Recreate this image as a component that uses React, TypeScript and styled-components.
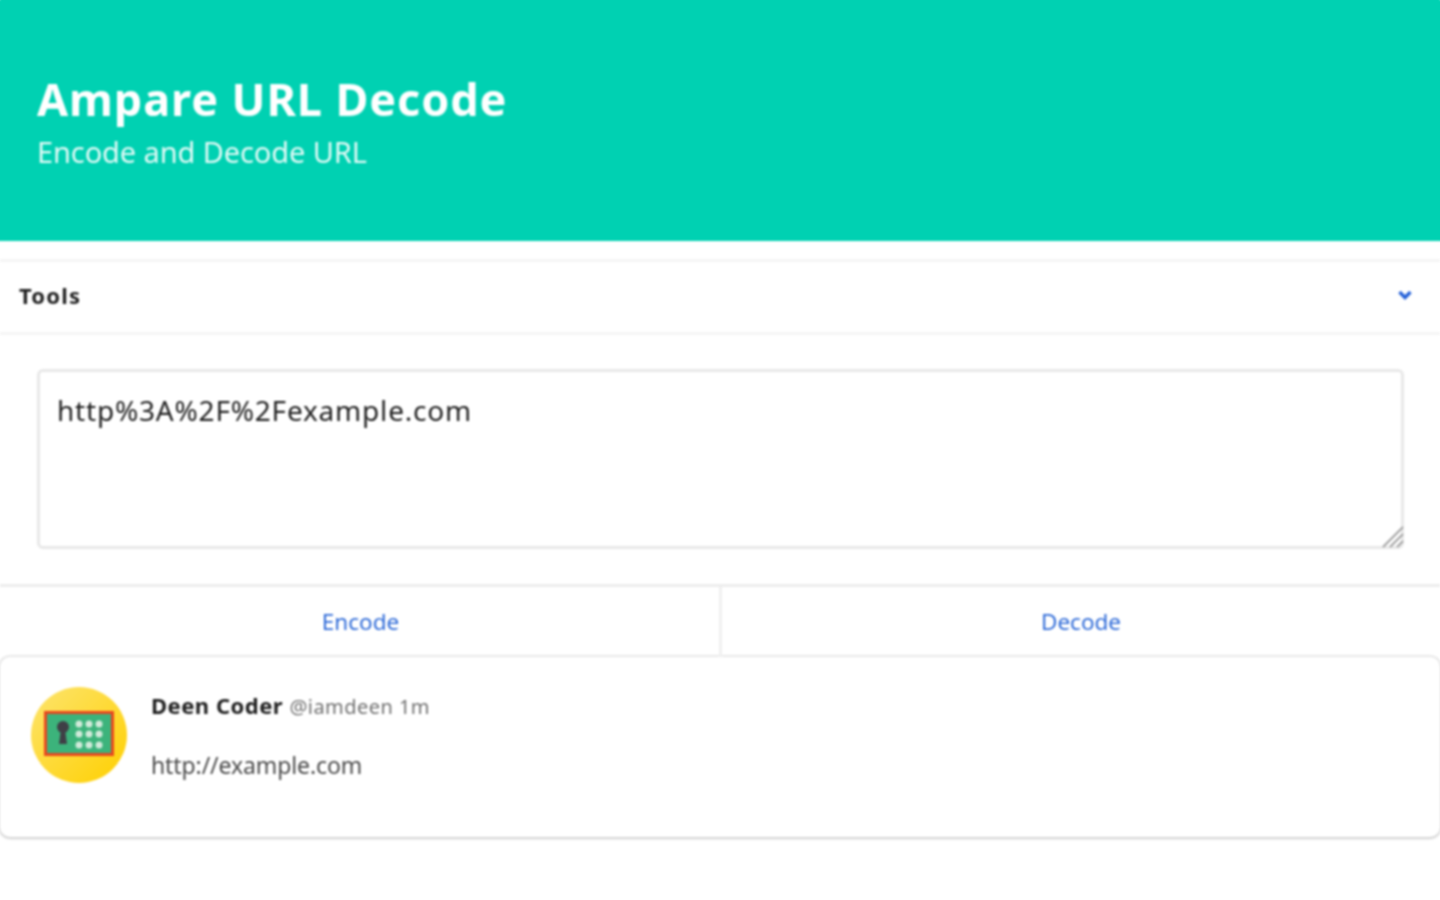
import React from "react";
import styled, { createGlobalStyle } from "styled-components";

const Global = createGlobalStyle`
  html, body { margin: 0; padding: 0; background: #fff; }
  body { font-family: "Noto Sans", "Open Sans", sans-serif; color: #4a4a4a; }
`;
const Frame = styled.div`
  width: 1440px;
  height: 900px;
  overflow: hidden;
  background: #fff;
`;
const Page = styled.main`
  filter: blur(0.8px);
`;
const Hero = styled.header`
  height: 241px;
  box-sizing: border-box;
  background: #00d1b2;
  box-shadow: 0 -8px 0 #00d1b2, -8px 0 0 #00d1b2, 8px 0 0 #00d1b2;
  color: #fff;
  padding: 69px 37px 0;
`;
const Title = styled.h1`
  margin: 0;
  font-size: 45px;
  line-height: 60px;
  font-weight: 700;
  letter-spacing: 0.9px;
`;
const Subtitle = styled.h2`
  margin: 4px 0 0;
  font-size: 29px;
  line-height: 38px;
  font-weight: 400;
  color: rgba(255, 255, 255, 0.88);
  letter-spacing: -0.1px;
`;
const Panel = styled.section`
  margin-top: 18px;
`;
const PanelHead = styled.div`
  height: 76px;
  box-sizing: border-box;
  border-top: 3px solid #f5f5f5;
  border-bottom: 3px solid #f5f5f5;
  padding: 0 27px 4px 19px;
  display: flex;
  align-items: center;
  justify-content: space-between;
`;
const PanelTitle = styled.span`
  font-size: 22px;
  font-weight: 700;
  letter-spacing: 1.2px;
  color: #1f1f1f;
`;
const Field = styled.div`
  position: relative;
  padding: 34px 36px 35px 37px;
`;
const TextArea = styled.textarea`
  display: block;
  width: 100%;
  height: 180px;
  box-sizing: border-box;
  border: 3px solid #e8e8e8;
  border-radius: 6px;
  padding: 20px 17px 4px;
  font: 400 28px/36px "Noto Sans", sans-serif;
  letter-spacing: 0.8px;
  color: #222;
  outline: none;
  background: #fff;
  resize: none;
`;
const Grip = styled.svg`
  position: absolute;
  right: 36px;
  bottom: 36px;
  width: 22px;
  height: 22px;
`;
const Actions = styled.div`
  display: grid;
  grid-template-columns: 722px 1fr;
  height: 73px;
  box-sizing: border-box;
  border-top: 3px solid #ededed;
`;
const Action = styled.a<{ $divided?: boolean }>`
  display: flex;
  align-items: center;
  justify-content: center;
  font-size: 22.5px;
  color: #2f6bd8;
  padding: 0 0 2px ${(p) => (p.$divided ? "2px" : "0")};
  border-right: ${(p) => (p.$divided ? "3px solid #f0f0f0" : "none")};
`;
const Card = styled.article`
  height: 180px;
  box-sizing: border-box;
  border-radius: 10px;
  background: #fff;
  box-shadow: 0 2px 3px rgba(10, 10, 10, 0.1), 0 0 0 2px rgba(10, 10, 10, 0.09);
  padding: 30px 31px;
  display: flex;
  gap: 24px;
`;
const Avatar = styled.svg`
  width: 96px;
  height: 96px;
  flex: none;
`;
const Body = styled.div`
  margin-top: 0;
`;
const Meta = styled.p`
  margin: 0;
  font-size: 22px;
  line-height: 36px;
  letter-spacing: 0.5px;
`;
const Name = styled.strong`
  font-weight: 700;
  color: #1f1f1f;
`;
const Small = styled.small`
  font-size: 20px;
  letter-spacing: 0.45px;
  color: #6f6f6f;
`;
const Message = styled.p`
  margin: 23px 0 0;
  font-size: 23px;
  line-height: 34px;
  letter-spacing: -0.1px;
  color: #4a4a4a;
`;

const dots = [37, 47, 58].flatMap((y) => [48, 58, 68].map((x) => ({ x, y })));

export default function App() {
  return (
    <Frame>
      <Global />
      <Page>
        <Hero>
          <Title>Ampare URL Decode</Title>
          <Subtitle>Encode and Decode URL</Subtitle>
        </Hero>
        <Panel>
          <PanelHead>
            <PanelTitle>Tools</PanelTitle>
            <svg width="16" height="12" viewBox="0 0 16 12">
              <path d="M2.500 3l5.500 5.500L13.500 3" fill="none" stroke="#2561d8" strokeWidth="3.400" />
            </svg>
          </PanelHead>
          <Field>
            <TextArea defaultValue="http%3A%2F%2Fexample.com" />
            <Grip viewBox="0 0 22 22">
              <path d="M1 21L21 1M8 21L21 8M15 21l6-6" stroke="#a3a3a3" strokeWidth="2" fill="none" />
            </Grip>
          </Field>
          <Actions>
            <Action $divided>Encode</Action>
            <Action>Decode</Action>
          </Actions>
        </Panel>
        <Card>
          <Avatar viewBox="0 0 96 96">
            <defs>
              <linearGradient id="gold" x1="0" y1="0" x2="1" y2="1">
                <stop offset="0" stopColor="#fde46e" />
                <stop offset="1" stopColor="#ffd000" />
              </linearGradient>
            </defs>
            <circle cx="48" cy="48" r="48" fill="url(#gold)" />
            <rect x="13" y="24" width="70" height="45" fill="#e8471f" />
            <rect x="16" y="27" width="64" height="39" fill="#3cb37b" />
            <circle cx="32" cy="40" r="6" fill="#3f3f46" />
            <path d="M30 42h4l2 15h-8z" fill="#3f3f46" />
            {dots.map((d) => (
              <circle key={`${d.x}-${d.y}`} cx={d.x} cy={d.y} r="3.500" fill="#d2eadb" />
            ))}
          </Avatar>
          <Body>
            <Meta>
              <Name>Deen Coder</Name> <Small>@iamdeen 1m</Small>
            </Meta>
            <Message>http://example.com</Message>
          </Body>
        </Card>
      </Page>
    </Frame>
  );
}
